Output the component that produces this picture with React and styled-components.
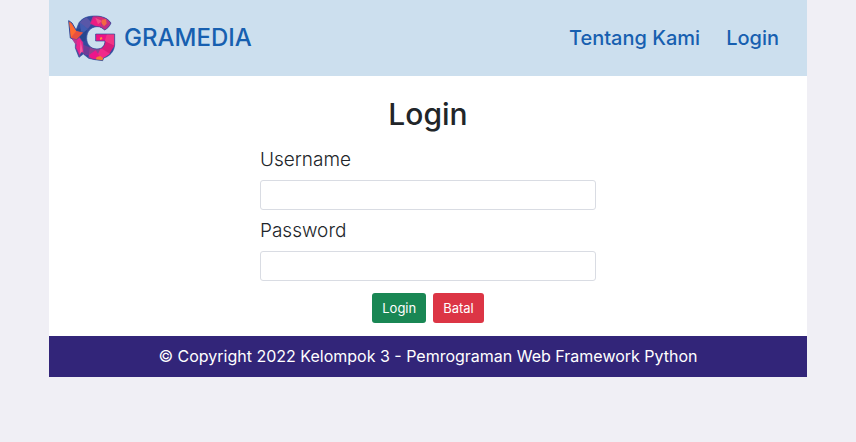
import React from "react";
import styled, { createGlobalStyle } from "styled-components";

const GlobalStyle = createGlobalStyle`
  *, *::before, *::after { box-sizing: border-box; }
  body {
    margin: 0;
    background: #f0eff5;
    color: #212529;
    font-family: Inter, "Liberation Sans", sans-serif;
  }
`;

const Page = styled.div`
  margin: 0 49px;
  background: #fff;
`;

const Header = styled.header`
  display: flex;
  align-items: center;
  justify-content: space-between;
  min-height: 76px;
  padding: 0 28px 0 18px;
  background: #ccdfee;
`;

const Brand = styled.a`
  display: flex;
  align-items: center;
  gap: 8px;
  color: #175fb0;
  font-size: 24px;
  font-weight: 500;
  line-height: 32px;
  text-decoration: none;
`;

const Logo = styled.svg`
  display: block;
  width: 49px;
  height: 48px;
`;

const Nav = styled.nav`
  display: flex;
  gap: 26px;
`;

const NavLink = styled.a`
  color: #175fb0;
  font-size: 20px;
  font-weight: 500;
  line-height: 32px;
  text-decoration: none;
`;

const Main = styled.main`
  display: flex;
  flex-direction: column;
  align-items: center;
  padding: 17px 16px 13px;
`;

const Title = styled.h1`
  margin: 0 0 12px;
  font-size: 30px;
  font-weight: 500;
  line-height: 42px;
`;

const Form = styled.form`
  width: 100%;
  max-width: 336px;
`;

const Field = styled.div`
  display: flex;
  flex-direction: column;
  gap: 8px;
  margin-bottom: 8px;
`;

const Label = styled.label`
  font-size: 19px;
  font-weight: 300;
  line-height: 25px;
`;

const Input = styled.input`
  width: 100%;
  height: 30px;
  padding: 4px 10px;
  border: 1px solid #d9dce3;
  border-radius: 3px;
  background: #fff;
  color: inherit;
  font: inherit;
  font-size: 14px;
`;

const Actions = styled.div`
  display: flex;
  justify-content: center;
  gap: 7px;
  padding-top: 4px;
`;

const Button = styled.button`
  height: 30px;
  padding: 0 10px;
  border: 0;
  border-radius: 3px;
  background: ${({ $tone }) => ($tone === "danger" ? "#dc3545" : "#198754")};
  color: #fff;
  font: inherit;
  font-size: 13px;
  cursor: pointer;
`;

const Footer = styled.footer`
  padding: 8px 16px;
  background: #322579;
  color: #fff;
  font-size: 16px;
  line-height: 25px;
  text-align: center;
`;

const G_SHAPE =
  "M151 44C141 29 124 23 104 23C82 23 66 28 55 43L45 68L44 119L55 147L68 137L84 150L103 154L126 157L129 149C146 144 160 131 162 110L162 77H105V98H133C133 112 124 122 109 122C91 122 78 110 78 90C78 69 90 56 109 55C119 54 126 60 132 65C140 61 147 54 151 44Z";

function GramediaLogo() {
  return (
    <Logo viewBox="19 17 147 144" aria-hidden="true">
      <defs>
        <clipPath id="g-shape">
          <path d={G_SHAPE} />
        </clipPath>
      </defs>
      <g clipPath="url(#g-shape)">
        <path fill="#344a9e" d="M19 17H170V165H19Z" />
        <path fill="#5957a8" d="M55 43L76 25L94 44L81 63Z" />
        <path fill="#27468f" d="M44 62L80 60L74 96L46 110Z" />
        <path fill="#425cb0" d="M57 42L82 62L62 77Z" />
        <path fill="#c12b8a" d="M88 46L98 20H127L120 60L109 56Z" />
        <path fill="#ec1d83" d="M91 44L101 27L123 42L117 58Z" />
        <path fill="#d92c75" d="M105 21L139 27L132 44L121 42Z" />
        <path fill="#f0508a" d="M104 28L124 38L112 48Z" />
        <path fill="#c02f86" d="M130 25L156 42L136 70L118 58Z" />
        <path fill="#f26843" d="M124 34L136 32L138 46L130 54L122 44Z" />
        <path fill="#e8237f" d="M104 75H163V115L130 128L132 98H104Z" />
        <path fill="#ed1386" d="M104 77L139 79L132 101L110 99Z" />
        <path fill="#f23584" d="M139 77L162 77V112L132 99Z" />
        <path fill="#d91d7b" d="M132 99L161 112L146 136L122 125Z" />
        <path fill="#f02a8a" d="M119 118L148 136L124 153L100 132Z" />
        <path fill="#6c3c97" d="M64 108L90 118L97 139L70 141Z" />
        <path fill="#94408f" d="M88 116L119 122L105 151L83 149Z" />
        <path fill="#ed168a" d="M84 141L105 126L119 147L96 157Z" />
        <path fill="#f47b35" d="M108 146L119 143L128 150L126 160L105 154Z" />
        <path fill="#ff8b3e" d="M117 88L124 86L125 92L119 95Z" />
      </g>
      <path d={G_SHAPE} fill="none" stroke="#294c9b" strokeWidth="2" strokeLinejoin="round" />
      <path fill="#f05b3f" stroke="#324b9a" strokeWidth="3" strokeLinejoin="round" d="M24 37L34 44L48 68L69 72L57 84L47 96L29 89Z" />
      <path fill="#ff6b30" d="M26 41L46 68L31 87Z" />
      <path fill="#e8503f" d="M31 88L48 68L67 73L47 94Z" />
      <path fill="#ec238e" stroke="#714499" strokeWidth="2" strokeLinejoin="round" d="M33 90L48 94L56 87L67 102L69 135L60 129L57 144L50 127L45 118L47 108Z" />
      <path fill="#b73a93" d="M35 93L49 97L47 112Z" />
      <path fill="#f45aa0" d="M60 98L66 128L57 138Z" />
    </Logo>
  );
}

export default function App() {
  return (
    <>
      <GlobalStyle />
      <Page>
        <Header>
          <Brand href="#">
            <GramediaLogo />
            GRAMEDIA
          </Brand>
          <Nav>
            <NavLink href="#tentang">Tentang Kami</NavLink>
            <NavLink href="#login">Login</NavLink>
          </Nav>
        </Header>
        <Main>
          <Title>Login</Title>
          <Form id="login" onSubmit={(event) => event.preventDefault()}>
            <Field>
              <Label htmlFor="username">Username</Label>
              <Input id="username" name="username" type="text" autoComplete="username" />
            </Field>
            <Field>
              <Label htmlFor="password">Password</Label>
              <Input id="password" name="password" type="password" autoComplete="current-password" />
            </Field>
            <Actions>
              <Button type="submit">Login</Button>
              <Button type="reset" $tone="danger">Batal</Button>
            </Actions>
          </Form>
        </Main>
        <Footer>© Copyright 2022 Kelompok 3 - Pemrograman Web Framework Python</Footer>
      </Page>
    </>
  );
}
